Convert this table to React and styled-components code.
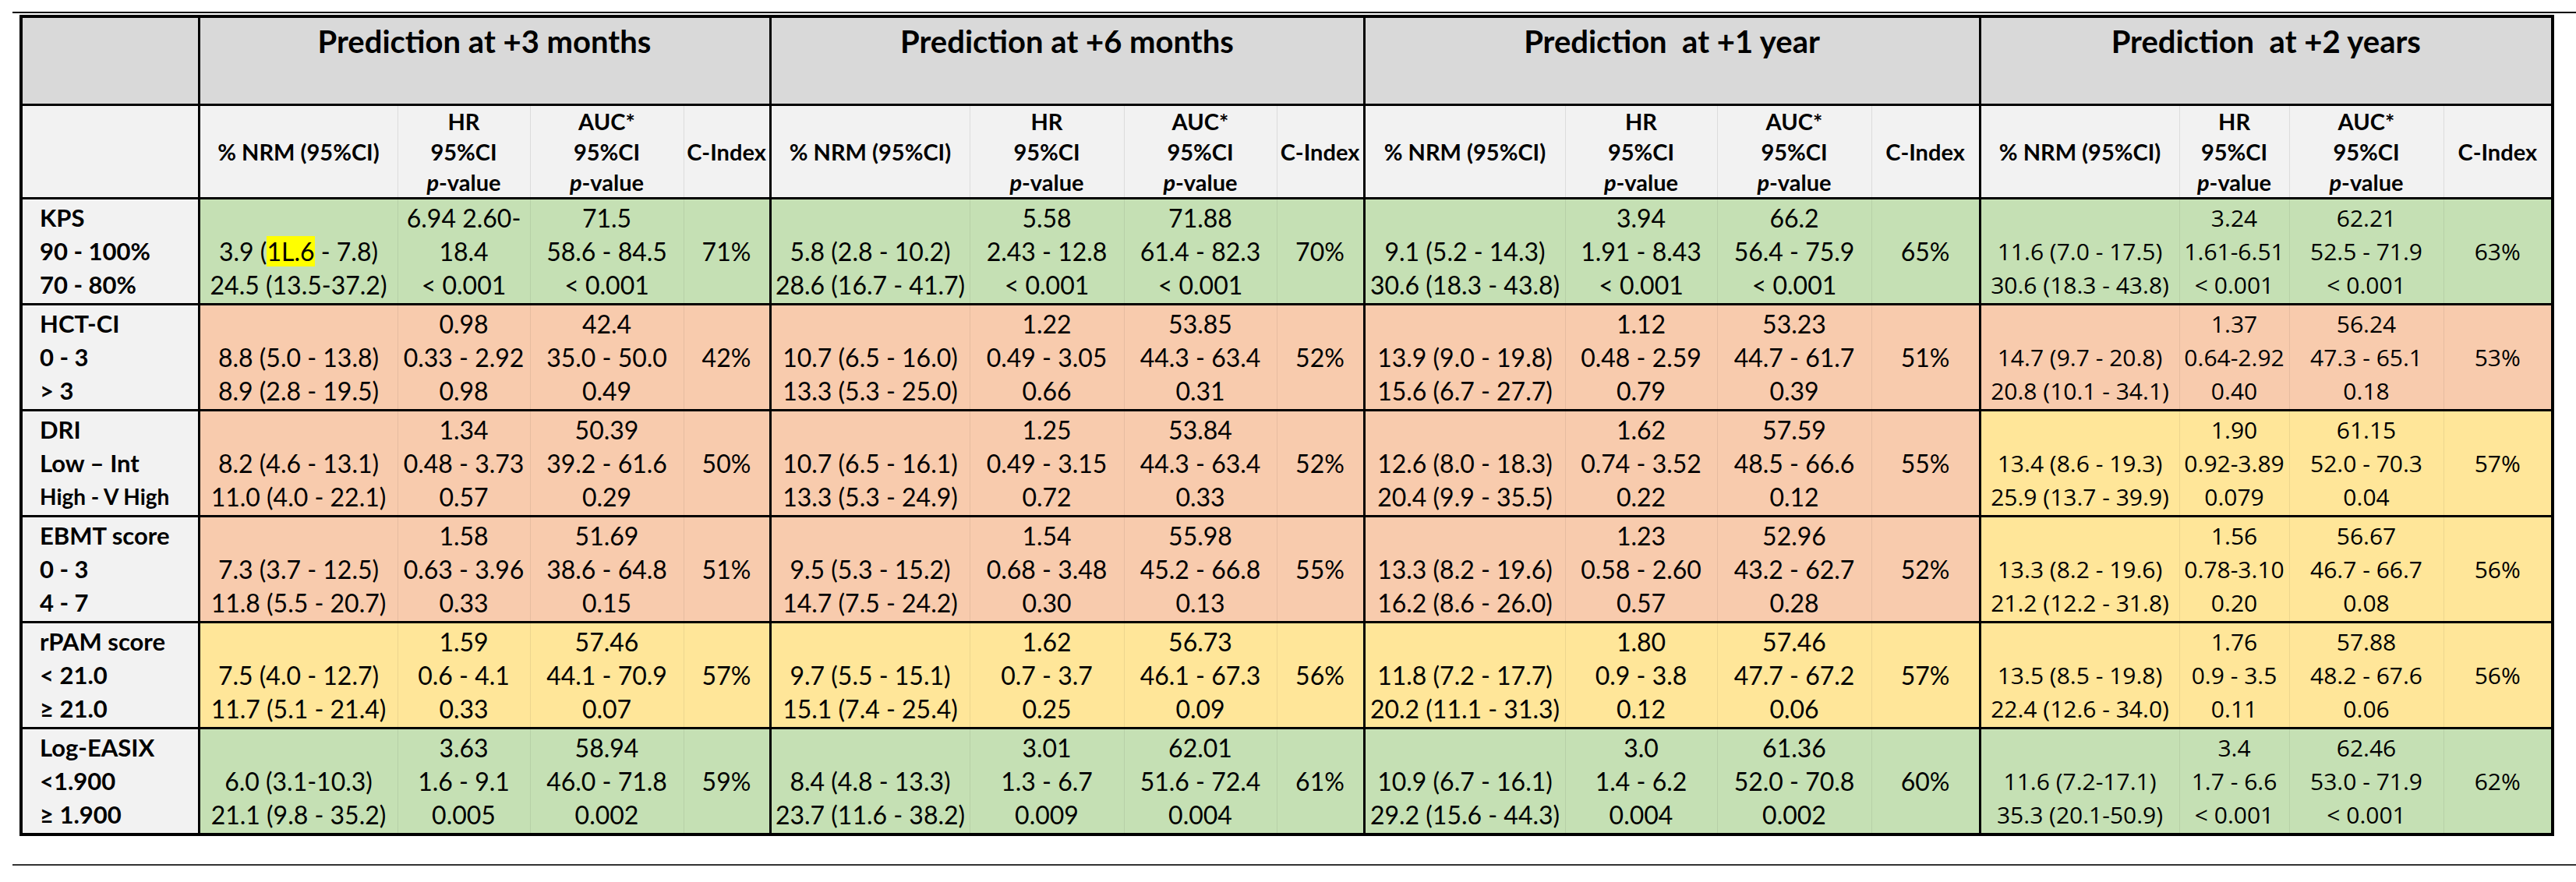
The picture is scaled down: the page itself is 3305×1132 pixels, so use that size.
import React from 'react';
import styled, { createGlobalStyle } from 'styled-components';

const GlobalStyle = createGlobalStyle`
  body {
    margin: 0;
    background: #fff;
    color: #000;
    font-family: Lato, 'Open Sans', sans-serif;
  }
`;

const COLORS = {
  green: '#c5e0b4',
  salmon: '#f8cbad',
  yellow: '#ffe699',
};

const Page = styled.div`
  width: 3305px;
  padding: 15px 0 0 16px;
  box-sizing: border-box;
`;

const Rule = styled.div`
  height: 2px;
  background: ${p => p.$color || '#000'};
`;

const Table = styled.table`
  border-collapse: collapse;
  table-layout: fixed;
  width: 3248px;
  margin: 2px 0 36px 9px;
  border: 4px solid #000;
`;

const CornerCell = styled.th`
  background: ${p => p.$bg};
  border: 3px solid #000;
`;

const GroupHead = styled.th`
  height: 104px;
  background: #d9d9d9;
  border: 3px solid #000;
  vertical-align: top;
  padding: 6px 0 0;
  font: 700 40px/48px Lato, sans-serif;
  white-space: pre;
  text-align: center;
`;

const SubHead = styled.th`
  height: 116px;
  background: #f2f2f2;
  border-bottom: 3px solid #000;
  border-left: ${p => (p.$first ? '3px solid #000' : '1px solid #dcdcdc')};
  padding: 0;
  font: 700 29px/39px Lato, sans-serif;
  text-align: center;
  vertical-align: middle;
  white-space: nowrap;
`;

const LabelCell = styled.td`
  height: 133px;
  background: #f2f2f2;
  border-top: 3px solid #000;
  padding: 0 0 0 22px;
  vertical-align: middle;
  font: 700 31px Lato, sans-serif;
`;

const DataCell = styled.td`
  background: ${p => COLORS[p.$tone]};
  border-top: 3px solid #000;
  border-left: ${p => (p.$first ? '3px solid #000' : '1px solid rgba(0,0,0,0.07)')};
  padding: 0;
  text-align: center;
  vertical-align: middle;
  font-family: ${p => (p.$alt ? "'Open Sans', 'Noto Sans', sans-serif" : 'Lato, sans-serif')};
  font-size: ${p => (p.$alt ? '30px' : '32px')};
`;

const Stack = styled.div`
  display: flex;
  flex-direction: column;
`;

const Line = styled.div`
  height: 43px;
  line-height: 43px;
  white-space: nowrap;
  font-size: ${p => (p.$small ? '28px' : 'inherit')};
`;

const Mark = styled.span`
  background: #ffff00;
`;

const Italic = styled.i`
  font-style: italic;
`;

const GROUP_WIDTHS = [
  [255, 170, 197, 111],
  [256, 198, 196, 112],
  [258, 195, 198, 139],
  [256, 141, 198, 140],
];

const GROUPS = [
  'Prediction at +3 months',
  'Prediction at +6 months',
  'Prediction  at +1 year',
  'Prediction  at +2 years',
];

const ROWS = [
  {
    label: ['KPS', '90 - 100%', '70 - 80%'],
    tones: ['green', 'green', 'green', 'green'],
    groups: [
      [['', '3.9 (1L.6 - 7.8)', '24.5 (13.5-37.2)'], ['6.94 2.60-', '18.4', '< 0.001'], ['71.5', '58.6 - 84.5', '< 0.001'], '71%'],
      [['', '5.8 (2.8 - 10.2)', '28.6 (16.7 - 41.7)'], ['5.58', '2.43 - 12.8', '< 0.001'], ['71.88', '61.4 - 82.3', '< 0.001'], '70%'],
      [['', '9.1 (5.2 - 14.3)', '30.6 (18.3 - 43.8)'], ['3.94', '1.91 - 8.43', '< 0.001'], ['66.2', '56.4 - 75.9', '< 0.001'], '65%'],
      [['', '11.6 (7.0 - 17.5)', '30.6 (18.3 - 43.8)'], ['3.24', '1.61-6.51', '< 0.001'], ['62.21', '52.5 - 71.9', '< 0.001'], '63%'],
    ],
  },
  {
    label: ['HCT-CI', '0 - 3', '> 3'],
    tones: ['salmon', 'salmon', 'salmon', 'salmon'],
    groups: [
      [['', '8.8 (5.0 - 13.8)', '8.9 (2.8 - 19.5)'], ['0.98', '0.33 - 2.92', '0.98'], ['42.4', '35.0 - 50.0', '0.49'], '42%'],
      [['', '10.7 (6.5 - 16.0)', '13.3 (5.3 - 25.0)'], ['1.22', '0.49 - 3.05', '0.66'], ['53.85', '44.3 - 63.4', '0.31'], '52%'],
      [['', '13.9 (9.0 - 19.8)', '15.6 (6.7 - 27.7)'], ['1.12', '0.48 - 2.59', '0.79'], ['53.23', '44.7 - 61.7', '0.39'], '51%'],
      [['', '14.7 (9.7 - 20.8)', '20.8 (10.1 - 34.1)'], ['1.37', '0.64-2.92', '0.40'], ['56.24', '47.3 - 65.1', '0.18'], '53%'],
    ],
  },
  {
    label: ['DRI', 'Low – Int', 'High - V High'],
    tones: ['salmon', 'salmon', 'salmon', 'yellow'],
    groups: [
      [['', '8.2 (4.6 - 13.1)', '11.0 (4.0 - 22.1)'], ['1.34', '0.48 - 3.73', '0.57'], ['50.39', '39.2 - 61.6', '0.29'], '50%'],
      [['', '10.7 (6.5 - 16.1)', '13.3 (5.3 - 24.9)'], ['1.25', '0.49 - 3.15', '0.72'], ['53.84', '44.3 - 63.4', '0.33'], '52%'],
      [['', '12.6 (8.0 - 18.3)', '20.4 (9.9 - 35.5)'], ['1.62', '0.74 - 3.52', '0.22'], ['57.59', '48.5 - 66.6', '0.12'], '55%'],
      [['', '13.4 (8.6 - 19.3)', '25.9 (13.7 - 39.9)'], ['1.90', '0.92-3.89', '0.079'], ['61.15', '52.0 - 70.3', '0.04'], '57%'],
    ],
  },
  {
    label: ['EBMT score', '0 - 3', '4 - 7'],
    tones: ['salmon', 'salmon', 'salmon', 'yellow'],
    groups: [
      [['', '7.3 (3.7 - 12.5)', '11.8 (5.5 - 20.7)'], ['1.58', '0.63 - 3.96', '0.33'], ['51.69', '38.6 - 64.8', '0.15'], '51%'],
      [['', '9.5 (5.3 - 15.2)', '14.7 (7.5 - 24.2)'], ['1.54', '0.68 - 3.48', '0.30'], ['55.98', '45.2 - 66.8', '0.13'], '55%'],
      [['', '13.3 (8.2 - 19.6)', '16.2 (8.6 - 26.0)'], ['1.23', '0.58 - 2.60', '0.57'], ['52.96', '43.2 - 62.7', '0.28'], '52%'],
      [['', '13.3 (8.2 - 19.6)', '21.2 (12.2 - 31.8)'], ['1.56', '0.78-3.10', '0.20'], ['56.67', '46.7 - 66.7', '0.08'], '56%'],
    ],
  },
  {
    label: ['rPAM score', '< 21.0', '≥ 21.0'],
    tones: ['yellow', 'yellow', 'yellow', 'yellow'],
    groups: [
      [['', '7.5 (4.0 - 12.7)', '11.7 (5.1 - 21.4)'], ['1.59', '0.6 - 4.1', '0.33'], ['57.46', '44.1 - 70.9', '0.07'], '57%'],
      [['', '9.7 (5.5 - 15.1)', '15.1 (7.4 - 25.4)'], ['1.62', '0.7 - 3.7', '0.25'], ['56.73', '46.1 - 67.3', '0.09'], '56%'],
      [['', '11.8 (7.2 - 17.7)', '20.2 (11.1 - 31.3)'], ['1.80', '0.9 - 3.8', '0.12'], ['57.46', '47.7 - 67.2', '0.06'], '57%'],
      [['', '13.5 (8.5 - 19.8)', '22.4 (12.6 - 34.0)'], ['1.76', '0.9 - 3.5', '0.11'], ['57.88', '48.2 - 67.6', '0.06'], '56%'],
    ],
  },
  {
    label: ['Log-EASIX', '<1.900', '≥ 1.900'],
    tones: ['green', 'green', 'green', 'green'],
    groups: [
      [['', '6.0 (3.1-10.3)', '21.1 (9.8 - 35.2)'], ['3.63', '1.6 - 9.1', '0.005'], ['58.94', '46.0 - 71.8', '0.002'], '59%'],
      [['', '8.4 (4.8 - 13.3)', '23.7 (11.6 - 38.2)'], ['3.01', '1.3 - 6.7', '0.009'], ['62.01', '51.6 - 72.4', '0.004'], '61%'],
      [['', '10.9 (6.7 - 16.1)', '29.2 (15.6 - 44.3)'], ['3.0', '1.4 - 6.2', '0.004'], ['61.36', '52.0 - 70.8', '0.002'], '60%'],
      [['', '11.6 (7.2-17.1)', '35.3 (20.1-50.9)'], ['3.4', '1.7 - 6.6', '< 0.001'], ['62.46', '53.0 - 71.9', '< 0.001'], '62%'],
    ],
  },
];

// the one highlighted value in the source table
const renderText = text => {
  if (text.includes('1L.6')) {
    const [before, after] = text.split('1L.6');
    return <>{before}<Mark>1L.6</Mark>{after}</>;
  }
  return text || '\u00a0';
};

const Lines = ({ items }) => (
  <Stack>
    {items.map((t, i) => <Line key={i}>{renderText(t)}</Line>)}
  </Stack>
);

const App = () => {
  return (
    <>
      <GlobalStyle />
      <Page>
        <Rule />
        <Table>
          <colgroup>
            <col style={{ width: 228 }} />
            {GROUP_WIDTHS.flat().map((w, i) => <col key={i} style={{ width: w }} />)}
          </colgroup>
          <thead>
            <tr>
              <CornerCell $bg="#d9d9d9" />
              {GROUPS.map(g => <GroupHead key={g} colSpan={4}>{g}</GroupHead>)}
            </tr>
            <tr>
              <CornerCell $bg="#f2f2f2" />
              {GROUPS.map(g => (
                <React.Fragment key={g}>
                  <SubHead $first>% NRM (95%CI)</SubHead>
                  <SubHead>HR<br />95%CI<br /><Italic>p</Italic>-value</SubHead>
                  <SubHead>AUC*<br />95%CI<br /><Italic>p</Italic>-value</SubHead>
                  <SubHead>C-Index</SubHead>
                </React.Fragment>
              ))}
            </tr>
          </thead>
          <tbody>
            {ROWS.map(row => (
              <tr key={row.label[0]}>
                <LabelCell>
                  <Stack>
                    {row.label.map((l, i) => (
                      <Line key={l} $small={i === 2 && l.startsWith('High')}>{l}</Line>
                    ))}
                  </Stack>
                </LabelCell>
                {row.groups.map((g, gi) => {
                  const tone = row.tones[gi];
                  const alt = gi === 3;
                  return (
                    <React.Fragment key={gi}>
                      <DataCell $tone={tone} $first $alt={alt}><Lines items={g[0]} /></DataCell>
                      <DataCell $tone={tone} $alt={alt}><Lines items={g[1]} /></DataCell>
                      <DataCell $tone={tone} $alt={alt}><Lines items={g[2]} /></DataCell>
                      <DataCell $tone={tone} $alt={alt}><Lines items={['', g[3], '']} /></DataCell>
                    </React.Fragment>
                  );
                })}
              </tr>
            ))}
          </tbody>
        </Table>
        <Rule $color="#333" />
      </Page>
    </>
  );
};

export default App;
